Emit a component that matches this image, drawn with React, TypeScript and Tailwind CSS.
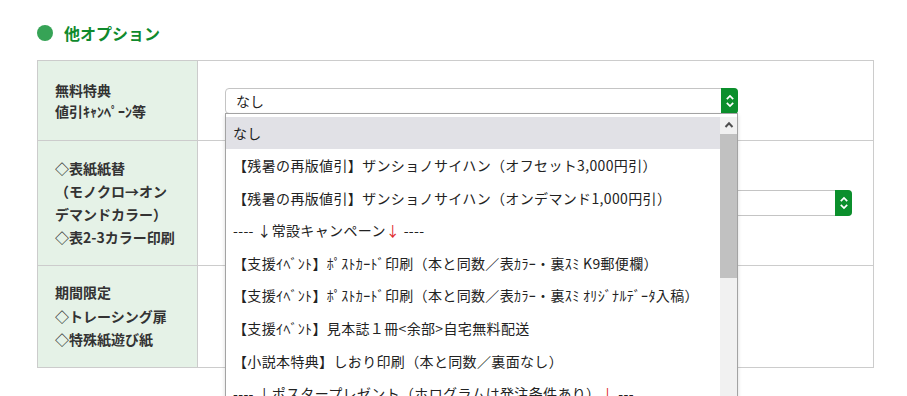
import React from 'react';

const font = { fontFamily: '"Noto Sans CJK JP", "Noto Sans", sans-serif' };

const options: { text: React.ReactNode }[] = [
  { text: 'なし' },
  { text: '【残暑の再版値引】ザンショノサイハン（オフセット3,000円引）' },
  { text: '【残暑の再版値引】ザンショノサイハン（オンデマンド1,000円引）' },
  {
    text: (
      <>
        ---- ↓常設キャンペーン<span className="text-[#e0282e]">↓</span> ----
      </>
    ),
  },
  { text: '【支援ｲﾍﾞﾝﾄ】ﾎﾟｽﾄｶｰﾄﾞ印刷（本と同数／表ｶﾗｰ・裏ｽﾐ K9郵便欄）' },
  { text: '【支援ｲﾍﾞﾝﾄ】ﾎﾟｽﾄｶｰﾄﾞ印刷（本と同数／表ｶﾗｰ・裏ｽﾐ ｵﾘｼﾞﾅﾙﾃﾞｰﾀ入稿）' },
  { text: '【支援ｲﾍﾞﾝﾄ】見本誌１冊<余部>自宅無料配送' },
  { text: '【小説本特典】しおり印刷（本と同数／裏面なし）' },
  {
    text: (
      <>
        ---- ↓ポスタープレゼント（ホログラムは発注条件あり）<span className="text-[#e0282e]">↓</span> ---
      </>
    ),
  },
  { text: '【ポスター】B2ポスター（ホログラム）' },
];

function UpDown() {
  return (
    <svg width="10" height="14" viewBox="0 0 10 14" fill="none">
      <path d="M1.8 5.2 L5 2 L8.2 5.2" stroke="white" strokeWidth="1.7" />
      <path d="M1.8 8.8 L5 12 L8.2 8.8" stroke="white" strokeWidth="1.7" />
    </svg>
  );
}

function SelectBox({ width, children }: { width: string; children?: React.ReactNode }) {
  return (
    <div className={`relative ${width}`}>
      <div className="flex h-[26px] rounded-[4px] border border-[#c4c4c4] bg-white">
        <div className="flex-1 pl-[10px] text-[14px] leading-[24px] text-[#222]">なし</div>
        <div className="-my-px -mr-px flex w-[17px] items-center justify-center rounded-r-[4px] bg-[#0b8f2c]">
          <UpDown />
        </div>
      </div>
      {children}
    </div>
  );
}

function Dropdown() {
  return (
    <div className="absolute left-0 top-[25px] z-10 h-[300px] w-[513px] overflow-hidden border border-[#a3a3a3] bg-white pt-[3px] shadow-[0_2px_4px_rgba(0,0,0,0.15)]">
      <div className="flex">
        <ul className="flex-1 overflow-hidden">
          {options.map((o, i) => (
            <li
              key={i}
              className={`h-[32.6px] whitespace-nowrap pl-[7px] text-[14px] leading-[32.6px] tracking-[0.35px] text-[#222] ${
                i === 0 ? 'bg-[#e1e1e6]' : ''
              }`}
            >
              {o.text}
            </li>
          ))}
        </ul>
        <div className="flex h-[300px] w-[17px] flex-col bg-[#f1f1f1]">
          <div className="flex h-[17px] items-center justify-center">
            <svg width="10" height="8" viewBox="0 0 10 8" fill="none">
              <path d="M1.5 6 L5 2.3 L8.5 6" stroke="#505050" strokeWidth="2" />
            </svg>
          </div>
          <div className="h-[144px] bg-[#c1c1c1]" />
        </div>
      </div>
    </div>
  );
}

export default function App() {
  return (
    <div className="h-[396px] w-[907px] overflow-hidden bg-white" style={font}>
      <div className="pl-[37px] pt-[23px]">
        <h2 className="flex items-center gap-[11px] text-[16px] font-bold leading-[20px] text-[#0f8a2d]">
          <span className="h-[16px] w-[16px] rounded-full bg-[#36a356]" />
          他オプション
        </h2>

        <table className="mt-[17px] w-[837px] border-collapse text-[14px]">
          <tbody>
            <tr className="h-[80px]">
              <th className="w-[160px] border border-[#cccccc] bg-[#e5f2e7] px-[17px] text-left align-middle font-bold leading-[21px] text-[#333]">
                無料特典
                <br />
                値引ｷｬﾝﾍﾟｰﾝ等
              </th>
              <td className="border border-[#cccccc] pl-[27px] align-middle">
                <SelectBox width="w-[513px]">
                  <Dropdown />
                </SelectBox>
              </td>
            </tr>
            <tr className="h-[125px]">
              <th className="border border-[#cccccc] bg-[#e5f2e7] px-[17px] text-left align-middle font-bold leading-[23px] text-[#333]">
                ◇表紙紙替
                <br />
                （モノクロ→オン
                <br />
                デマンドカラー）
                <br />
                ◇表2-3カラー印刷
              </th>
              <td className="border border-[#cccccc] pl-[27px] align-middle">
                <SelectBox width="w-[627px]" />
              </td>
            </tr>
            <tr className="h-[102px]">
              <th className="border border-[#cccccc] bg-[#e5f2e7] px-[17px] text-left align-middle font-bold leading-[23.5px] text-[#333]">
                期間限定
                <br />
                ◇トレーシング扉
                <br />
                ◇特殊紙遊び紙
              </th>
              <td className="border border-[#cccccc] pl-[27px] align-middle"></td>
            </tr>
          </tbody>
        </table>
      </div>
    </div>
  );
}
